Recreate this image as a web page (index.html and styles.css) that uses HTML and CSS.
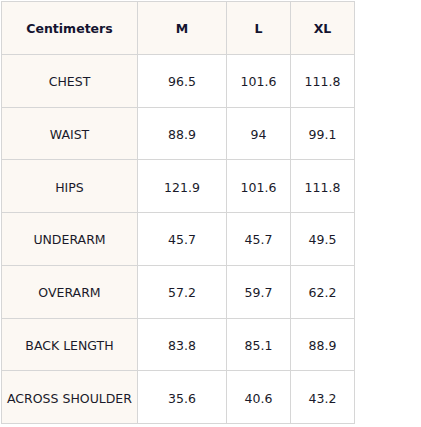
FILE: index.html
```html
<!DOCTYPE html>
<html>
<head>
<meta charset="utf-8">
<link rel="stylesheet" href="styles.css">
</head>
<body>
<table class="size-table">
  <colgroup>
    <col class="c1"><col class="c2"><col class="c3"><col class="c4">
  </colgroup>
  <thead>
    <tr><th class="label">Centimeters</th><th>M</th><th>L</th><th>XL</th></tr>
  </thead>
  <tbody>
    <tr><td class="label">CHEST</td><td>96.5</td><td>101.6</td><td>111.8</td></tr>
    <tr><td class="label">WAIST</td><td>88.9</td><td>94</td><td>99.1</td></tr>
    <tr><td class="label">HIPS</td><td>121.9</td><td>101.6</td><td>111.8</td></tr>
    <tr><td class="label">UNDERARM</td><td>45.7</td><td>45.7</td><td>49.5</td></tr>
    <tr><td class="label">OVERARM</td><td>57.2</td><td>59.7</td><td>62.2</td></tr>
    <tr><td class="label">BACK LENGTH</td><td>83.8</td><td>85.1</td><td>88.9</td></tr>
    <tr><td class="label">ACROSS SHOULDER</td><td>35.6</td><td>40.6</td><td>43.2</td></tr>
  </tbody>
</table>
</body>
</html>
```

FILE: styles.css
```css
html, body {
  margin: 0;
  padding: 0;
  background: #ffffff;
}
body {
  padding: 1px 0 0 1px;
}
.size-table {
  border-collapse: collapse;
  table-layout: fixed;
  width: 353px;
  font-family: "DejaVu Sans", Verdana, sans-serif;
  font-size: 12.5px;
  color: #1a1a2a;
}
.c1 { width: 136px; }
.c2 { width: 89px; }
.c3 { width: 64px; }
.c4 { width: 64px; }
.size-table th,
.size-table td {
  border: 1px solid #d6d6d6;
  height: 52.75px;
  padding: 2px 0 0 0;
  text-align: center;
  vertical-align: middle;
  box-sizing: border-box;
  white-space: nowrap;
}
.size-table th {
  background: #fcf8f3;
  font-weight: bold;
  color: #141430;
}
.size-table td.label {
  background: #fcf8f3;
}
```
